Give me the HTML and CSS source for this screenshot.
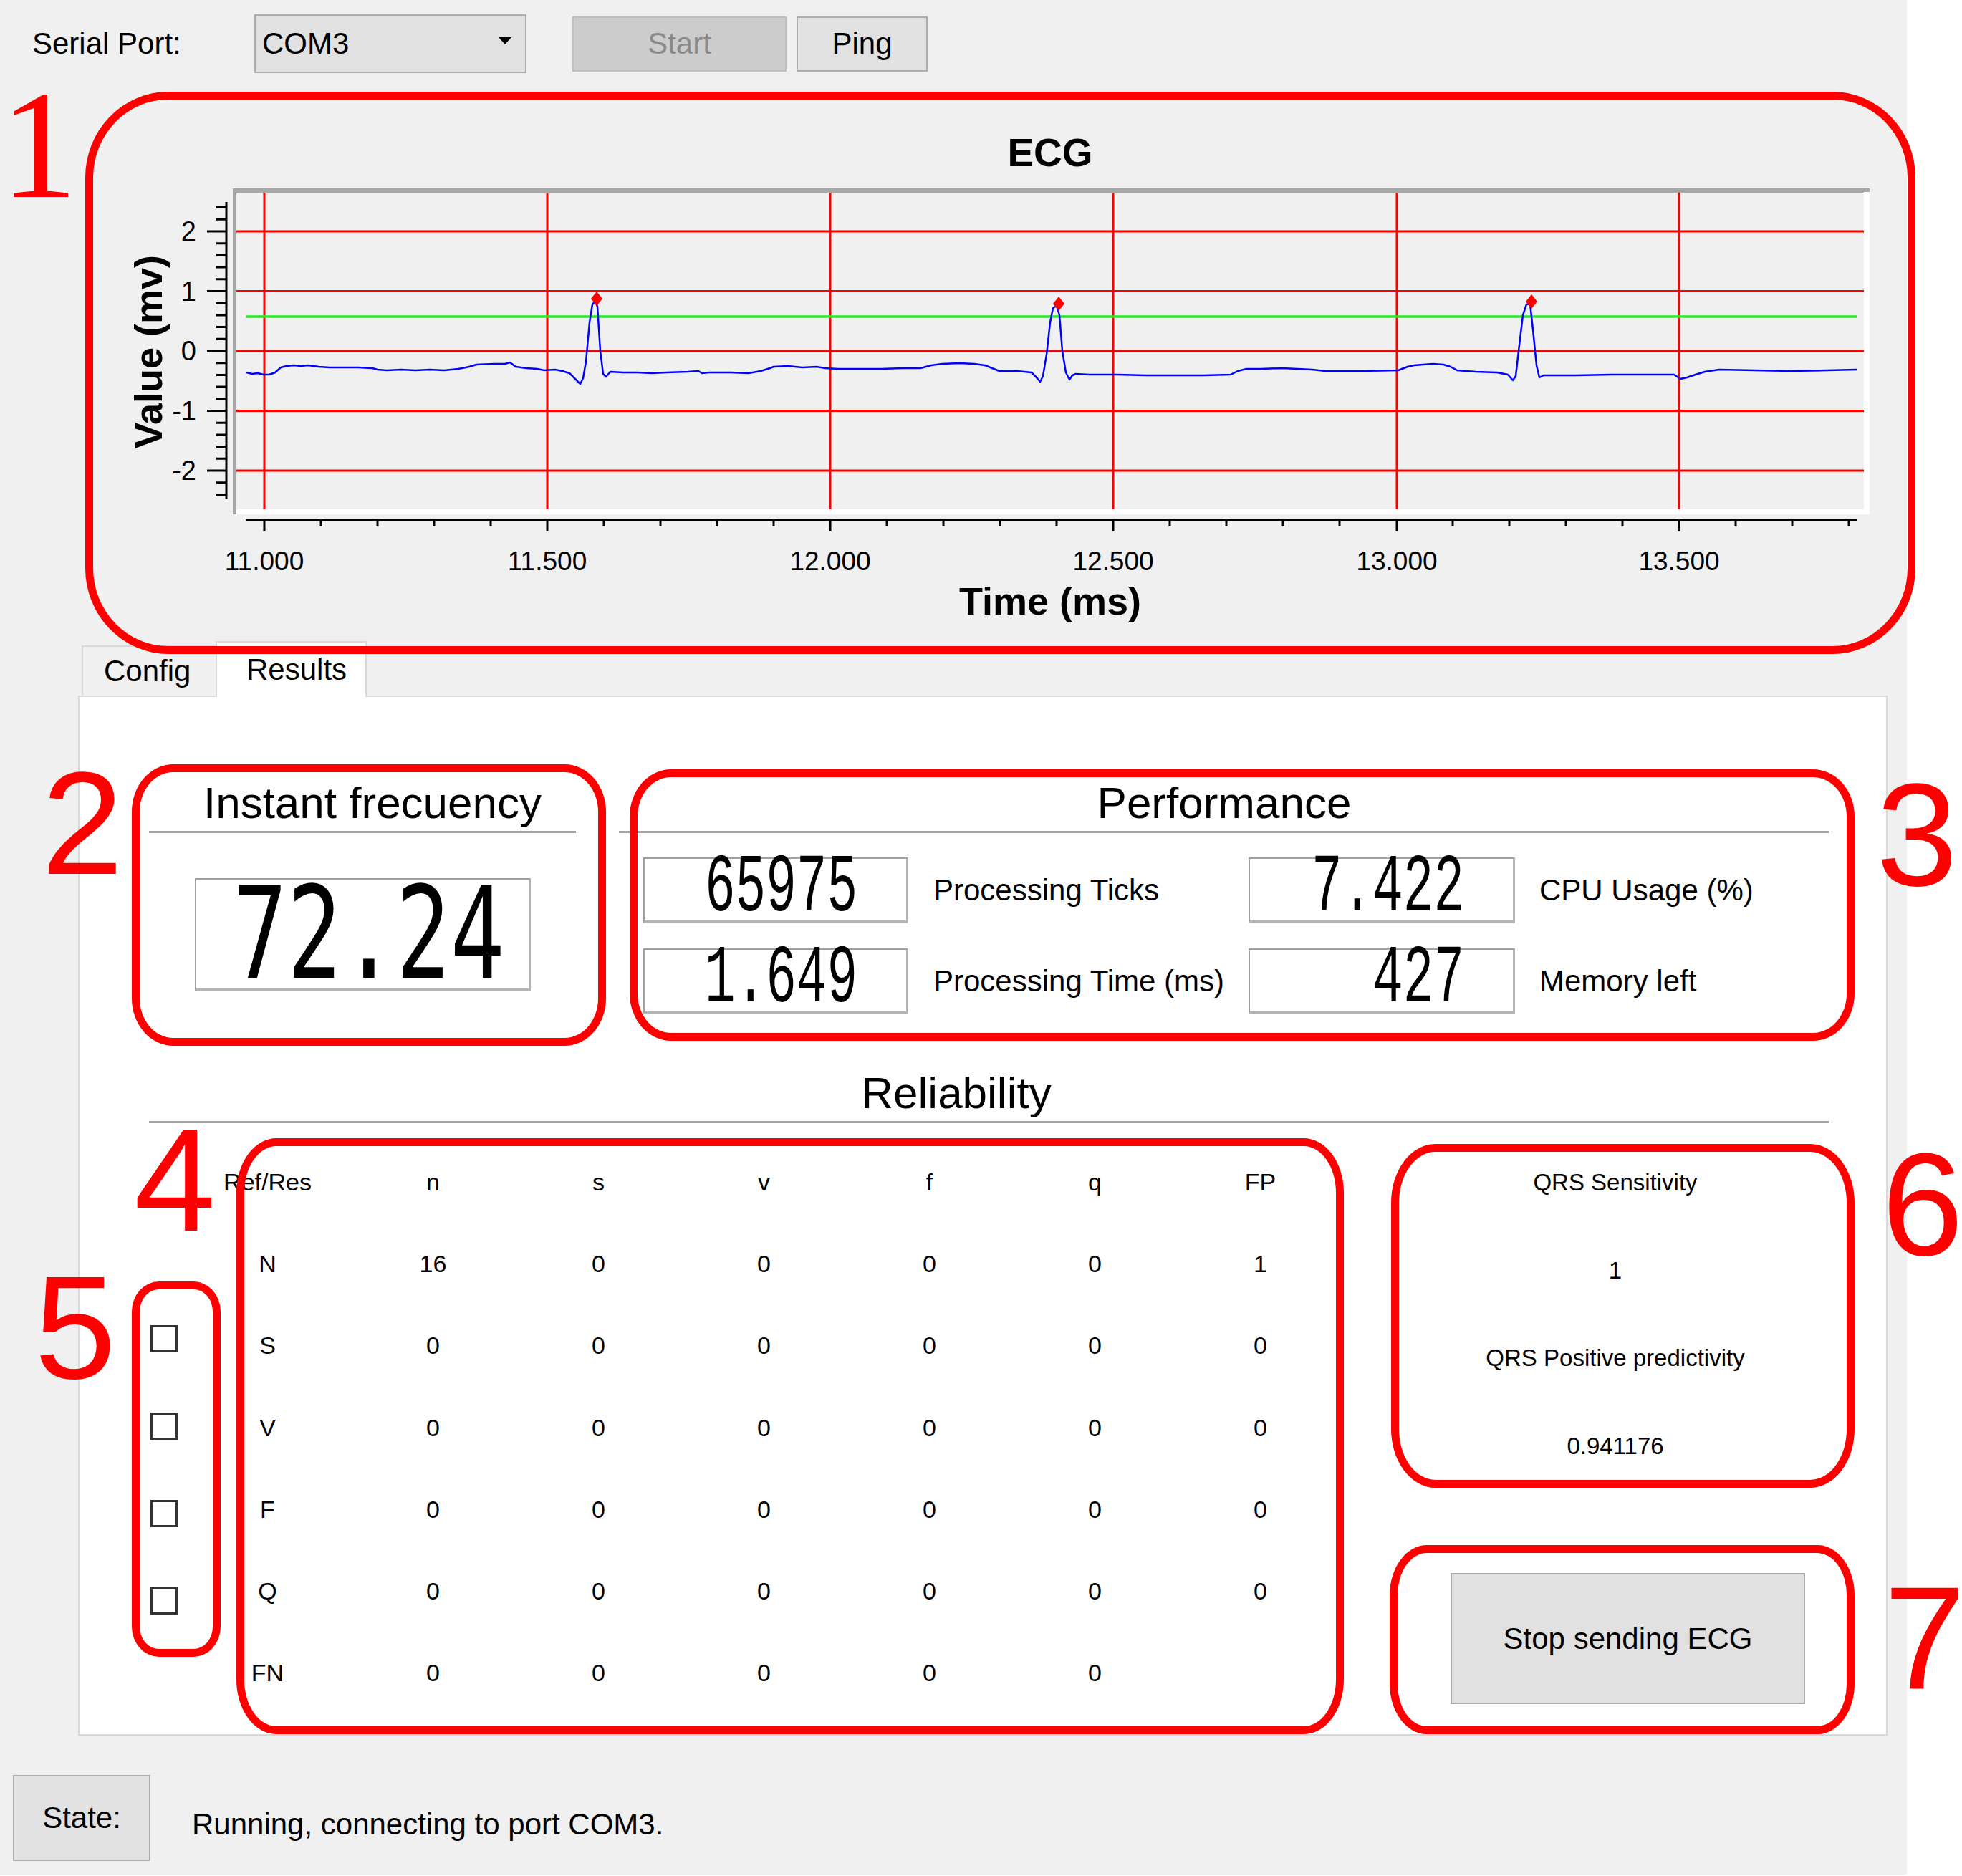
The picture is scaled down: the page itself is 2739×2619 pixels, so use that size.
FILE: index.html
```html
<!DOCTYPE html>
<html lang="en">
<head>
<meta charset="utf-8">
<title>ECG Monitor</title>
<link rel="stylesheet" href="styles.css">
</head>
<body>
<div class="window">
  <div class="toolbar">
    <span class="tb-label">Serial Port:</span>
    <div class="combo"><span>COM3</span><span class="arrow"></span></div>
    <div class="btn start">Start</div>
    <div class="btn ping">Ping</div>
  </div>

  <div class="chart-title">ECG</div>
  <svg class="plot" viewBox="0 246 2662 561" width="2662" height="561" xmlns="http://www.w3.org/2000/svg">
    <rect class="pf-bg" x="326" y="263" width="2284" height="455"/>
    <rect class="pf-dark" x="326" y="263" width="2284" height="6"/>
    <rect class="pf-dark" x="325" y="263" width="5" height="455"/>
    <rect class="pf-light" x="2602" y="268" width="8" height="450"/>
    <rect class="pf-light" x="330" y="711" width="2280" height="7"/>
    <path class="grid" d="M330,323H2602 M330,406.5H2602 M330,490H2602 M330,573.5H2602 M330,657H2602 M369,269V711 M764,269V711 M1159,269V711 M1554,269V711 M1950,269V711 M2344,269V711"/>
    <path class="thr" d="M343,442H2592"/>
    <path class="trace" d="M344,520 L352,522 L360,521 L368,523 L376,523 L384,520 L392,513 L400,511 L410,510 L420,511 L430,510 L445,512 L460,513 L480,513 L500,513 L520,514 L527,516 L540,517 L560,516 L580,517 L600,516 L620,517 L640,515 L655,512 L665,509 L690,508 L705,508 L712,506 L720,512 L735,514 L750,515 L760,517 L775,516 L785,518 L795,521 L805,531 L810,536 L814,528 L818,505 L823,450 L827,425 L831,420 L834,428 L838,490 L842,522 L846,526 L852,519 L870,520 L890,520 L910,521 L930,520 L960,519 L975,518 L980,521 L990,520 L1020,520 L1045,521 L1062,518 L1075,514 L1080,512 L1100,511 L1120,513 L1140,512 L1152,514 L1170,515 L1200,515 L1230,515 L1260,514 L1285,514 L1300,510 L1315,508 L1340,507 L1360,508 L1375,510 L1385,514 L1395,518 L1420,518 L1440,520 L1448,528 L1452,533 L1456,525 L1461,495 L1466,450 L1470,430 L1475,427 L1479,440 L1483,490 L1488,520 L1493,530 L1497,524 L1502,522 L1520,523 L1560,523 L1600,524 L1640,524 L1680,524 L1718,523 L1728,518 L1740,515 L1760,515 L1790,514 L1832,516 L1850,518 L1900,518 L1952,517 L1965,512 L1974,510 L2000,508 L2015,509 L2025,512 L2034,517 L2060,519 L2090,520 L2105,523 L2112,531 L2116,525 L2120,490 L2126,440 L2131,425 L2136,424 L2140,460 L2145,510 L2149,527 L2155,524 L2163,524 L2200,524 L2250,523 L2300,523 L2337,523 L2346,529 L2355,527 L2370,522 L2380,519 L2400,516 L2450,517 L2500,518 L2550,517 L2592,516"/>
    <polygon class="peak" points="833,407 841,417 833,427 825,417"/>
    <polygon class="peak" points="1478,414 1486,424 1478,434 1470,424"/>
    <polygon class="peak" points="2138,411 2146,421 2138,431 2130,421"/>
    <path class="axis" d="M316,282V697 M343,726H2592"/>
    <path class="axis" d="M289,323H316 M289,406.5H316 M289,490H316 M289,573.5H316 M289,657H316 M302,289.6H316 M302,306.3H316 M302,339.7H316 M302,356.4H316 M302,373.1H316 M302,389.8H316 M302,423.2H316 M302,439.9H316 M302,456.6H316 M302,473.3H316 M302,506.7H316 M302,523.4H316 M302,540.1H316 M302,556.8H316 M302,590.2H316 M302,606.9H316 M302,623.6H316 M302,640.3H316 M302,673.7H316 M302,690.4H316"/>
    <path class="axis" d="M369,726V742 M764,726V742 M1159,726V742 M1554,726V742 M1950,726V742 M2344,726V742 M448,726V735 M527,726V735 M606,726V735 M685,726V735 M843,726V735 M922,726V735 M1001,726V735 M1080,726V735 M1238,726V735 M1317,726V735 M1396,726V735 M1475,726V735 M1633,726V735 M1712,726V735 M1791,726V735 M1870,726V735 M2028,726V735 M2107,726V735 M2186,726V735 M2265,726V735 M2423,726V735 M2502,726V735 M2581,726V735"/>
    <text class="ytick" x="274" y="336">2</text>
    <text class="ytick" x="274" y="419.5">1</text>
    <text class="ytick" x="274" y="503">0</text>
    <text class="ytick" x="274" y="586.5">-1</text>
    <text class="ytick" x="274" y="670">-2</text>
    <text class="xtick" x="369" y="796">11.000</text>
    <text class="xtick" x="764" y="796">11.500</text>
    <text class="xtick" x="1159" y="796">12.000</text>
    <text class="xtick" x="1554" y="796">12.500</text>
    <text class="xtick" x="1950" y="796">13.000</text>
    <text class="xtick" x="2344" y="796">13.500</text>
    <text class="ylabel" transform="translate(226,491) rotate(-90)">Value (mv)</text>
  </svg>
  <div class="axis-title">Time (ms)</div>

  <div class="tabs">
    <div class="tab tab-config">Config</div>
    <div class="tab tab-results">Results</div>
  </div>

  <div class="panel">
    <div class="top-groups">
      <section class="group">
        <h2 class="group-head head-freq">Instant frecuency</h2>
        <div class="sep"></div>
        <div class="lcd lcd-big"><span>72.24</span></div>
      </section>
      <section class="group">
        <h2 class="group-head">Performance</h2>
        <div class="sep"></div>
        <div class="perf-grid">
          <div class="lcd lcd-small"><span>65975</span></div>
          <div class="perf-label">Processing Ticks</div>
          <div class="lcd lcd-small"><span>7.422</span></div>
          <div class="perf-label perf-label-r">CPU Usage (%)</div>
          <div class="lcd lcd-small"><span>1.649</span></div>
          <div class="perf-label">Processing Time (ms)</div>
          <div class="lcd lcd-small"><span>427</span></div>
          <div class="perf-label perf-label-r">Memory left</div>
        </div>
      </section>
    </div>

    <section class="reliability">
      <h2 class="group-head head-rel">Reliability</h2>
      <div class="sep"></div>
      <div class="rel-body">
        <div class="checks">
          <span class="check"></span>
          <span class="check"></span>
          <span class="check"></span>
          <span class="check"></span>
        </div>
        <div class="matrix">
          <span>Ref/Res</span><span>n</span><span>s</span><span>v</span><span>f</span><span>q</span><span>FP</span>
          <span>N</span><span>16</span><span>0</span><span>0</span><span>0</span><span>0</span><span>1</span>
          <span>S</span><span>0</span><span>0</span><span>0</span><span>0</span><span>0</span><span>0</span>
          <span>V</span><span>0</span><span>0</span><span>0</span><span>0</span><span>0</span><span>0</span>
          <span>F</span><span>0</span><span>0</span><span>0</span><span>0</span><span>0</span><span>0</span>
          <span>Q</span><span>0</span><span>0</span><span>0</span><span>0</span><span>0</span><span>0</span>
          <span>FN</span><span>0</span><span>0</span><span>0</span><span>0</span><span>0</span><span></span>
        </div>
        <div class="qrs">
          <div class="qrs-line">QRS Sensitivity</div>
          <div class="qrs-line">1</div>
          <div class="qrs-line">QRS Positive predictivity</div>
          <div class="qrs-line">0.941176</div>
          <div class="btn stop">Stop sending ECG</div>
        </div>
      </div>
    </section>
  </div>

  <div class="status">
    <div class="btn state">State:</div>
    <span class="status-text">Running, connecting to port COM3.</span>
  </div>

  <div class="note note-1"></div>
  <div class="note note-2"></div>
  <div class="note note-3"></div>
  <div class="note note-4"></div>
  <div class="note note-5"></div>
  <div class="note note-6"></div>
  <div class="note note-7"></div>
  <span class="num num-1">1</span>
  <span class="num num-2">2</span>
  <span class="num num-3">3</span>
  <span class="num num-4">4</span>
  <span class="num num-5">5</span>
  <span class="num num-6">6</span>
  <span class="num num-7">7</span>
</div>
</body>
</html>
```

FILE: styles.css
```css
html, body {
  margin: 0;
  padding: 0;
  overflow: hidden;
  background: #ffffff;
}
body {
  font-family: "Liberation Sans", Arial, sans-serif;
  color: #000;
}
.window {
  position: relative;
  width: 2662px;
  height: 2617px;
  background: #f0f0f0;
}

/* toolbar */
.toolbar {
  display: flex;
  align-items: center;
  height: 82px;
  padding: 20px 0 0 45px;
}
.tb-label {
  font-size: 42px;
  width: 310px;
}
.combo {
  box-sizing: border-box;
  width: 380px;
  height: 82px;
  background: #e1e1e1;
  border: 2px solid #adadad;
  display: flex;
  align-items: center;
  justify-content: space-between;
  padding: 0 19px 0 9px;
  font-size: 42px;
}
.arrow {
  width: 0;
  height: 0;
  border-left: 9px solid transparent;
  border-right: 9px solid transparent;
  border-top: 10px solid #000;
  margin-top: -8px;
}
.btn {
  box-sizing: border-box;
  display: flex;
  align-items: center;
  justify-content: center;
  font-size: 42px;
  background: #e1e1e1;
  border: 2px solid #adadad;
}
.start {
  width: 299px;
  height: 77px;
  margin-left: 64px;
  background: #cccccc;
  border-color: #bfbfbf;
  color: #8a8a8a;
}
.ping {
  width: 183px;
  height: 77px;
  margin-left: 14px;
}

/* chart */
.chart-title {
  margin-top: 78px;
  padding-left: 270px;
  text-align: center;
  font-size: 55px;
  font-weight: bold;
  line-height: 66px;
}
.plot {
  display: block;
  width: 2662px;
  height: 561px;
}
.pf-bg { fill: #f0f0f0; }
.pf-dark { fill: #a8a8a8; }
.pf-light { fill: #ffffff; }
.grid { stroke: #ff0000; stroke-width: 3; fill: none; }
.thr { stroke: #22ee22; stroke-width: 3.5; fill: none; }
.trace { stroke: #0000ff; stroke-width: 2.5; fill: none; stroke-linejoin: round; }
.peak { fill: #ff0000; }
.axis { stroke: #000; stroke-width: 3; fill: none; }
.ytick {
  font-family: "Liberation Sans", Arial, sans-serif;
  font-size: 38px;
  text-anchor: end;
  fill: #000;
}
.xtick {
  font-family: "Liberation Sans", Arial, sans-serif;
  font-size: 37px;
  text-anchor: middle;
  fill: #000;
}
.ylabel {
  font-family: "Liberation Sans", Arial, sans-serif;
  font-size: 54px;
  font-weight: bold;
  text-anchor: middle;
  fill: #000;
}
.axis-title {
  padding-left: 270px;
  text-align: center;
  font-size: 54px;
  font-weight: bold;
  line-height: 64px;
}

/* tabs */
.tabs {
  display: flex;
  align-items: flex-end;
  margin: 24px 0 0 114px;
  height: 76px;
}
.tab {
  box-sizing: border-box;
  font-size: 42px;
  border: 2px solid #d9d9d9;
  border-bottom: none;
  display: flex;
  align-items: center;
}
.tab-config {
  width: 187px;
  height: 70px;
  padding-left: 29px;
  background: #f0f0f0;
  border-right: none;
}
.tab-results {
  width: 211px;
  height: 78px;
  margin-bottom: -2px;
  padding-left: 41px;
  background: #ffffff;
  position: relative;
  z-index: 1;
}

/* panel */
.panel {
  box-sizing: border-box;
  width: 2526px;
  height: 1452px;
  margin-left: 109px;
  background: #ffffff;
  border: 2px solid #d9d9d9;
  padding: 112px 0 0 97px;
}
.top-groups {
  display: grid;
  grid-template-columns: 596px 1690px;
  column-gap: 60px;
  align-items: start;
}
.group-head {
  margin: 0;
  font-size: 62px;
  font-weight: normal;
  line-height: 72px;
  text-align: center;
}
.head-freq { padding-left: 28px; }
.sep {
  height: 3px;
  background: #a4a4a4;
  margin-top: 3px;
}
.lcd {
  box-sizing: border-box;
  background: #ffffff;
  border-top: 2px solid #a0a0a0;
  border-left: 2px solid #a0a0a0;
  border-right: 3px solid #b4b4b4;
  border-bottom: 4px solid #b4b4b4;
  display: flex;
  align-items: center;
  justify-content: flex-end;
}
.lcd-big {
  width: 469px;
  height: 158px;
  margin: 63px auto 0;
  padding-right: 33px;
}
.lcd-big span {
  display: inline-block;
  font-family: "DejaVu Sans Mono", monospace;
  font-size: 126px;
  line-height: 0.75;
  transform: scaleY(1.42);
}
.lcd-small {
  height: 92px;
  padding-right: 68px;
}
.lcd-small span {
  display: inline-block;
  font-family: "Liberation Mono", monospace;
  font-size: 71px;
  line-height: 0.7;
  transform: scaleY(1.62);
}
.perf-grid {
  display: grid;
  grid-template-columns: 370px 475px 372px auto;
  grid-auto-rows: 92px;
  row-gap: 35px;
  margin-top: 34px;
  padding-left: 34px;
  align-items: center;
}
.perf-label {
  font-size: 42px;
  padding-left: 35px;
}
.perf-label-r { padding-left: 34px; }

/* reliability */
.reliability {
  margin-top: 74px;
  width: 2346px;
}
.head-rel { padding-right: 92px; }
.rel-body {
  display: flex;
  margin-top: 25px;
  align-items: flex-start;
}
.checks {
  width: 40px;
  padding-top: 257px;
  display: flex;
  flex-direction: column;
  gap: 84px;
}
.check {
  display: block;
  box-sizing: border-box;
  width: 38px;
  height: 38px;
  margin-left: 2px;
  border: 3px solid #333333;
  background: #ffffff;
}
.matrix {
  margin-left: 10px;
  display: grid;
  grid-template-columns: repeat(7, 231px);
  grid-auto-rows: 114.3px;
  align-items: center;
  justify-items: center;
  font-size: 34px;
}
.qrs {
  margin-left: 115px;
  margin-top: -3px;
  width: 530px;
  display: flex;
  flex-direction: column;
}
.qrs-line {
  height: 122.5px;
  display: flex;
  align-items: center;
  justify-content: center;
  font-size: 33px;
}
.stop {
  width: 495px;
  height: 183px;
  margin: 116px 0 0 35px;
}

/* status */
.status {
  display: flex;
  align-items: center;
  margin-top: 55px;
  padding-left: 18px;
}
.state {
  width: 192px;
  height: 120px;
}
.status-text {
  margin: 18px 0 0 58px;
  font-size: 42px;
}

/* annotations */
.note {
  position: absolute;
  box-sizing: border-box;
  border: 11px solid #ff0000;
  pointer-events: none;
  z-index: 5;
}
.note-1 { left: 119px; top: 128px; width: 2555px; height: 785px; border-radius: 116px / 120px; }
.note-2 { left: 184px; top: 1067px; width: 662px; height: 393px; border-radius: 58px / 66px; }
.note-3 { left: 879px; top: 1074px; width: 1710px; height: 379px; border-radius: 58px / 66px; }
.note-4 { left: 330px; top: 1589px; width: 1546px; height: 832px; border-radius: 56px / 76px; }
.note-5 { left: 184px; top: 1789px; width: 124px; height: 524px; border-radius: 38px / 42px; }
.note-6 { left: 1942px; top: 1597px; width: 647px; height: 480px; border-radius: 62px / 82px; }
.note-7 { left: 1940px; top: 2157px; width: 649px; height: 264px; border-radius: 52px / 70px; }
.num {
  position: absolute;
  color: #ff0000;
  font-family: "Liberation Sans", Arial, sans-serif;
  font-size: 205px;
  line-height: 1;
  z-index: 5;
}
.num-1 {
  font-family: "Liberation Serif", "Times New Roman", serif;
  font-size: 216px;
  left: 0;
  top: 95px;
}
.num-2 { left: 58px; top: 1046px; }
.num-3 { left: 2619px; top: 1062px; }
.num-4 { left: 187px; top: 1544px; }
.num-5 { left: 48px; top: 1750px; }
.num-6 { left: 2627px; top: 1578px; }
.num-7 { left: 2630px; top: 2183px; }
```
